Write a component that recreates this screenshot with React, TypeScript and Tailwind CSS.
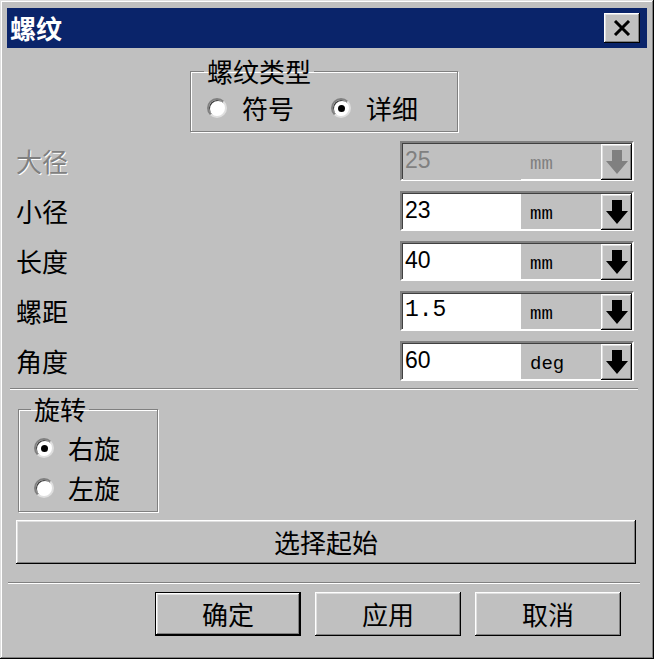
const cjk = "font-['Noto_Sans_CJK_SC',sans-serif]";
const raised =
  'shadow-[inset_-1px_-1px_#000,inset_1px_1px_#fff,inset_-2px_-2px_#808080,inset_2px_2px_#dfdfdf]';

function DownArrow({ color }: { color: string }) {
  return (
    <svg width="24" height="26" viewBox="0 0 24 26">
      <path d="M7 1h10v11h6l-11 13-11-13h6z" fill={color} />
    </svg>
  );
}

function Radio({ checked }: { checked?: boolean }) {
  return (
    <span className="w-[20px] h-[20px] rounded-full bg-white border-2 border-t-[#808080] border-l-[#808080] border-b-[#dfdfdf] border-r-[#dfdfdf] shadow-[inset_1px_1px_0_#404040] flex items-center justify-center shrink-0">
      {checked && <span className="w-[7px] h-[7px] rounded-full bg-black" />}
    </span>
  );
}

function Field({ value, unit, disabled, mono }: { value: string; unit: string; disabled?: boolean; mono?: boolean }) {
  return (
    <div className="ml-auto mr-[13px] w-[234px] h-[40px] flex border-2 border-t-[#808080] border-l-[#808080] border-b-white border-r-white shadow-[inset_1px_1px_0_#404040]">
      <div
        className={`w-[118px] ml-[1px] mt-[1px] h-[36px] flex items-center pl-[2px] pb-[3px] text-[23px] ${
          mono ? "font-['Liberation_Mono',monospace]" : "font-['Liberation_Sans',sans-serif]"
        } ${disabled ? 'bg-[#c0c0c0] text-[#808080]' : 'bg-white text-black'}`}
      >
        {value}
      </div>
      <div
        className={`flex-1 flex items-center pl-[9px] pt-[6px] font-['Liberation_Mono',monospace] text-[19px] ${
          disabled ? 'text-[#808080]' : 'text-black'
        }`}
      >
        {unit}
      </div>
      <div className={`w-[31px] h-[36px] mt-[1px] flex items-center justify-center bg-[#c0c0c0] ${raised}`}>
        <DownArrow color={disabled ? '#808080' : '#000'} />
      </div>
    </div>
  );
}

function Row({ label, children, disabled }: { label: string; children: React.ReactNode; disabled?: boolean }) {
  return (
    <div className="h-[40px] flex items-center">
      <span
        className={`pl-[9px] text-[26px] leading-none ${cjk} ${
          disabled ? 'text-[#808080] [text-shadow:1px_1px_0_#fff]' : 'text-black'
        }`}
      >
        {label}
      </span>
      {children}
    </div>
  );
}

function Button({ label, isDefault, className }: { label: string; isDefault?: boolean; className?: string }) {
  return (
    <button
      className={`h-[44px] bg-[#c0c0c0] text-[26px] leading-none text-black ${cjk} ${
        isDefault ? `border border-black ${raised}` : raised
      } ${className ?? ''}`}
    >
      {label}
    </button>
  );
}

export default function App() {
  return (
    <div className="w-[654px] h-[659px] bg-[#c0c0c0] px-[7px] pt-[8px] flex flex-col shadow-[inset_-1px_-1px_#000,inset_1px_1px_#dfdfdf,inset_-2px_-2px_#808080,inset_2px_2px_#fff]">
      {/* title bar */}
      <div className="h-[40px] bg-[#0a246a] flex items-center justify-between pl-[3px] pr-[7px]">
        <span className={`text-white text-[26px] leading-none font-semibold ${cjk}`}>螺纹</span>
        <div className={`w-[36px] h-[30px] bg-[#c0c0c0] flex items-center justify-center ${raised}`}>
          <svg width="18" height="16" viewBox="0 0 18 16">
            <path d="M2 1l14 14M16 1L2 15" stroke="#000" strokeWidth="3" />
          </svg>
        </div>
      </div>

      {/* thread type */}
      <fieldset className="ml-[183px] w-[268px] mt-[9px] border border-[#808080] shadow-[inset_1px_1px_0_#fff,1px_1px_0_#fff] px-0">
        <legend className={`ml-[13px] px-[3px] text-[26px] leading-[28px] ${cjk}`}>螺纹类型</legend>
        <div className="h-[46px] flex items-center pl-[16px]">
          <Radio />
          <span className={`ml-[15px] text-[26px] leading-none ${cjk}`}>符号</span>
          <span className="ml-[37px]">
            <Radio checked />
          </span>
          <span className={`ml-[15px] text-[26px] leading-none ${cjk}`}>详细</span>
        </div>
      </fieldset>

      {/* parameters */}
      <div className="mt-[9px] flex flex-col gap-[10px]">
        <Row label="大径" disabled>
          <Field value="25" unit="mm" disabled />
        </Row>
        <Row label="小径">
          <Field value="23" unit="mm" />
        </Row>
        <Row label="长度">
          <Field value="40" unit="mm" />
        </Row>
        <Row label="螺距">
          <Field value="1.5" unit="mm" mono />
        </Row>
        <Row label="角度">
          <Field value="60" unit="deg" />
        </Row>
      </div>

      <div className="mt-[7px] ml-[3px] mr-[9px] h-[2px] border-t border-t-[#808080] border-b border-b-white" />

      {/* rotation */}
      <fieldset className="ml-[11px] w-[140px] mt-[5px] border border-[#808080] shadow-[inset_1px_1px_0_#fff,1px_1px_0_#fff] px-0">
        <legend className={`ml-[12px] px-[3px] text-[26px] leading-[28px] ${cjk}`}>旋转</legend>
        <div className="pt-[5px] pb-[3px] pl-[15px] flex flex-col">
          <div className="h-[40px] flex items-center">
            <Radio checked />
            <span className={`ml-[14px] text-[26px] leading-none ${cjk}`}>右旋</span>
          </div>
          <div className="h-[40px] flex items-center">
            <Radio />
            <span className={`ml-[14px] text-[26px] leading-none ${cjk}`}>左旋</span>
          </div>
        </div>
      </fieldset>

      <Button label="选择起始" className="mt-[8px] ml-[9px] w-[620px]" />

      <div className="mt-[18px] ml-[1px] mr-[7px] h-[2px] border-t border-t-[#808080] border-b border-b-white" />

      <div className="mt-[8px] flex justify-end gap-[14px] mr-[26px]">
        <Button label="确定" isDefault className="w-[146px]" />
        <Button label="应用" className="w-[146px]" />
        <Button label="取消" className="w-[146px]" />
      </div>
    </div>
  );
}
